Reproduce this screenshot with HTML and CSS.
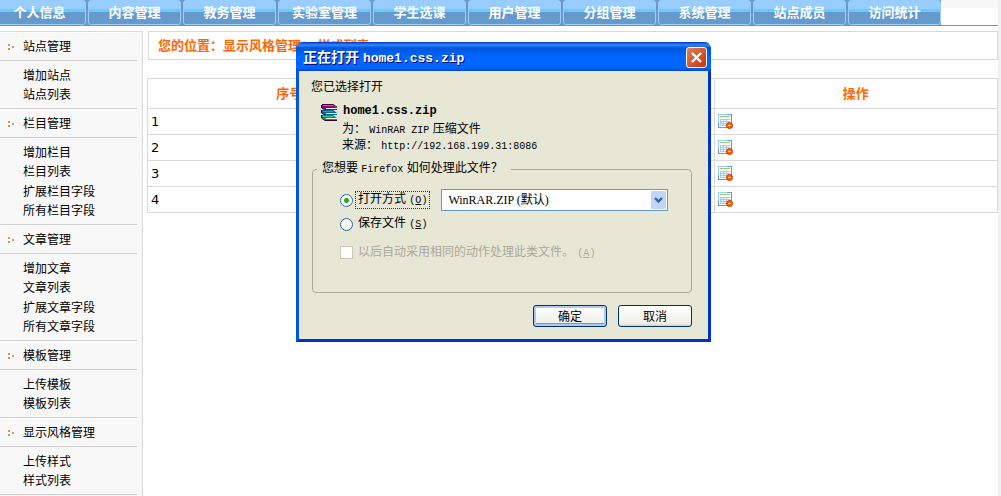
FILE: index.html
```html
<!DOCTYPE html>
<html lang="zh-CN">
<head>
    <meta charset="UTF-8">
    <meta name="viewport" content="width=device-width, initial-scale=1.0">
    <title>样式列表</title>
    <link rel="stylesheet" href="styles.css">
</head>
<body>
    <!-- 图标 -->
    <svg class="sprite" width="0" height="0">
        <symbol id="icon-delete" viewBox="0 0 16 16">
            <rect x="0.5" y="0.5" width="13" height="13" fill="#fff" stroke="#6699cc"/>
            <path d="M0.5 9V0.5H9" fill="none" stroke="#99ccff"/>
            <path d="M2 2.5H12" stroke="#99cc66"/>
            <path d="M2 5.5H12M2 7.5H12M2 9.5H12M2 11.5H8M2.5 5V12M5.5 5V12M8.5 5V12" stroke="#99ccff" fill="none"/>
            <circle cx="11.5" cy="11.5" r="3" fill="#ff6600" stroke="#cc3300"/>
            <path d="M10 11.5H13" stroke="#fff"/>
        </symbol>
    </svg>

    <ul class="nav">
        <li><a href="#">个人信息</a></li>
        <li><a href="#">内容管理</a></li>
        <li><a href="#">教务管理</a></li>
        <li><a href="#">实验室管理</a></li>
        <li><a href="#">学生选课</a></li>
        <li><a href="#">用户管理</a></li>
        <li><a href="#">分组管理</a></li>
        <li><a href="#">系统管理</a></li>
        <li><a href="#">站点成员</a></li>
        <li><a href="#">访问统计</a></li>
    </ul>

    <div class="layout">
        <!-- 左侧菜单 -->
        <div class="sidebar">
            <h2>站点管理</h2>
            <ul>
                <li><a href="#">增加站点</a></li>
                <li><a href="#">站点列表</a></li>
            </ul>
            <h2>栏目管理</h2>
            <ul>
                <li><a href="#">增加栏目</a></li>
                <li><a href="#">栏目列表</a></li>
                <li><a href="#">扩展栏目字段</a></li>
                <li><a href="#">所有栏目字段</a></li>
            </ul>
            <h2>文章管理</h2>
            <ul>
                <li><a href="#">增加文章</a></li>
                <li><a href="#">文章列表</a></li>
                <li><a href="#">扩展文章字段</a></li>
                <li><a href="#">所有文章字段</a></li>
            </ul>
            <h2>模板管理</h2>
            <ul>
                <li><a href="#">上传模板</a></li>
                <li><a href="#">模板列表</a></li>
            </ul>
            <h2>显示风格管理</h2>
            <ul>
                <li><a href="#">上传样式</a></li>
                <li><a href="#">样式列表</a></li>
            </ul>
        </div>

        <!-- 样式列表 -->
        <div class="main">
            <div class="position">您的位置：显示风格管理： 样式列表</div>
            <table class="list">
                <tr><th>序号</th><th>名称</th><th>操作</th></tr>
                <tr><td>1</td><td></td><td><a href="#" aria-label="删除"><svg class="icon"><use href="#icon-delete"/></svg></a></td></tr>
                <tr><td>2</td><td></td><td><a href="#" aria-label="删除"><svg class="icon"><use href="#icon-delete"/></svg></a></td></tr>
                <tr><td>3</td><td></td><td><a href="#" aria-label="删除"><svg class="icon"><use href="#icon-delete"/></svg></a></td></tr>
                <tr><td>4</td><td></td><td><a href="#" aria-label="删除"><svg class="icon"><use href="#icon-delete"/></svg></a></td></tr>
            </table>
        </div>
    </div>

    <!-- 下载对话框 -->
    <form class="dialog">
        <div class="titlebar">
            <span>正在打开 <span class="mono">home1.css.zip</span></span>
            <button type="button" class="close" aria-label="关闭">
                <svg width="19" height="19" viewBox="0 0 19 19"><path d="M5 5L14 14M14 5L5 14" stroke="#fff" stroke-width="2.4"/></svg>
            </button>
        </div>
        <div class="content">
            <p>您已选择打开</p>
            <div class="file">
                <svg width="17" height="17" viewBox="0 0 17 17">
                    <path d="M1 1H12L16 4V6H4L1 4Z" fill="#990066"/>
                    <path d="M2 1.5H12" stroke="#cc6699"/>
                    <path d="M5 4.5H16" stroke="#fff"/>
                    <path d="M1 6H12L16 9V11H4L1 9Z" fill="#006699"/>
                    <path d="M2 7.5H12" stroke="#3399cc"/>
                    <path d="M5 9.5H16" stroke="#ccffff"/>
                    <path d="M1 11H12L16 14V16H4L1 14Z" fill="#009966"/>
                    <path d="M2 12.5H12" stroke="#33cc99"/>
                    <path d="M5 14.5H16" stroke="#ffffcc"/>
                    <path d="M1 0.5H12L16 3M0.5 1V4L4 6M0.5 6V9L4 11M0.5 11V14L4 16.5H16" fill="none" stroke="#330033"/>
                </svg>
                <div>
                    <b class="mono">home1.css.zip</b>
                    <p>为： <span class="mono">WinRAR ZIP</span> 压缩文件</p>
                    <p>来源： <span class="mono">http://192.168.199.31:8086</span></p>
                </div>
            </div>
            <fieldset>
                <legend>您想要 <span class="mono">Firefox</span> 如何处理此文件？</legend>
                <div class="row">
                    <input type="radio" name="action" id="open" checked>
                    <label for="open" class="focus">打开方式 <span class="mono">(<u>O</u>)</span></label>
                    <div class="select">
                        <select aria-label="打开方式">
                            <option>WinRAR.ZIP (默认)</option>
                        </select>
                        <svg width="15" height="18" viewBox="0 0 15 18">
                            <rect width="15" height="18" rx="1" fill="#c2d5fc"/>
                            <path d="M4 7L7.5 10.5L11 7" fill="none" stroke="#336699" stroke-width="2.4"/>
                        </svg>
                    </div>
                </div>
                <div class="row">
                    <input type="radio" name="action" id="save">
                    <label for="save">保存文件 <span class="mono">(<u>S</u>)</span></label>
                </div>
                <div class="row disabled">
                    <input type="checkbox" id="auto" disabled>
                    <label for="auto">以后自动采用相同的动作处理此类文件。 <span class="mono">(<u>A</u>)</span></label>
                </div>
            </fieldset>
            <div class="buttons">
                <button type="button" class="default">确定</button>
                <button type="button">取消</button>
            </div>
        </div>
    </form>
</body>
</html>
```
FILE: styles.css
```css
* {
    box-sizing: border-box;
}
body {
    margin: 0;
    border-right: 3px solid #f0f0f0;
    min-height: 100vh;
    display: flex;
    flex-direction: column;
    overflow: hidden;
    background: #fff;
    color: #000;
    font: 12px/19px "Liberation Sans", "Noto Sans CJK SC", sans-serif;
}
ul, p, h2 {
    margin: 0;
    padding: 0;
    list-style: none;
}
a {
    color: inherit;
    text-decoration: none;
}
.sprite {
    position: absolute;
}

/* 顶部导航 */
.nav {
    display: flex;
    height: 26px;
    padding-right: 55px;
    border-bottom: 1px solid #6699cc;
    background: linear-gradient(#f7f7f7 8px, #fff 8px);
}
.nav li {
    flex: none;
    width: 95px;
    padding-right: 2px;
    background: #6699cc;
}
.nav li:first-child {
    margin-left: -7px;
}
.nav li:last-child {
    width: 93px;
    padding-right: 0;
}
.nav a {
    display: block;
    height: 25px;
    border: 1px solid #99ccff;
    border-radius: 3px;
    background: linear-gradient(#99ccff 8px, #66ccff 8px, #66ccff 11px, #6699cc 11px);
    color: #fff;
    font-size: 13px;
    font-weight: bold;
    line-height: 24px;
    text-align: center;
}

.layout {
    flex: 1;
    display: flex;
    gap: 4px;
    padding-top: 5px;
}

/* 左侧菜单 */
.sidebar {
    flex: none;
    width: 143px;
    padding-right: 5px;
    border: 1px solid #d9d9d9;
    border-left: none;
    border-bottom: none;
    background: #f8f8f8;
}
.sidebar h2 {
    display: flex;
    align-items: center;
    height: 29px;
    padding-top: 2px;
    border-top: 1px solid #fff;
    border-bottom: 1px solid #d0d0d0;
    font-size: 12px;
    font-weight: normal;
}
.sidebar h2::before {
    content: "";
    width: 7px;
    height: 7px;
    margin: 0 8px;
    background:
        linear-gradient(#cc9966, #cc9966) 0 0 / 2px 2px no-repeat,
        linear-gradient(#cc9933, #cc9933) 0 4px / 2px 2px no-repeat,
        linear-gradient(#c0a080, #c0a080) 4px 2px / 2px 2px no-repeat;
}
.sidebar ul {
    padding: 6px 0 2px 23px;
    border-bottom: 1px solid #d0d0d0;
}
.sidebar li:nth-child(even) {
    padding-bottom: 1px;
}

/* 内容区 */
.main {
    flex: 1;
}
.position {
    height: 29px;
    margin-left: 1px;
    padding-left: 9px;
    border: 1px solid #d9d9d9;
    color: #ff6600;
    font-size: 13px;
    font-weight: bold;
    line-height: 27px;
}
.list {
    width: 100%;
    margin-top: 18px;
    border-collapse: collapse;
    table-layout: fixed;
}
.list th, .list td {
    height: 26px;
    padding: 0 3px;
    border: 1px solid #d9d9d9;
    font-family: "DejaVu Sans", "Noto Sans CJK SC", sans-serif;
    font-size: 13px;
}
.list th {
    height: 30px;
    color: #ff6600;
}
.icon {
    display: block;
    width: 16px;
    height: 16px;
}

/* 下载对话框 */
.dialog {
    position: absolute;
    top: 42px;
    left: 296px;
    width: 415px;
    border: 3px solid #0033cc;
    border-top: none;
    border-left-color: #0055e5;
    border-radius: 7px 7px 0 0;
    background: #e7e7d6;
    line-height: 15px;
}
.mono {
    font-family: "Liberation Mono", monospace;
    font-size: 10px;
}
.titlebar {
    display: flex;
    align-items: center;
    justify-content: space-between;
    height: 29px;
    margin: 0 -3px;
    padding: 2px 4px 0 7px;
    border-radius: 7px 7px 0 0;
    background: linear-gradient(#0033cc, #3388ff 3px, #0055dd 6px, #0066ff 15px, #0066ff 26px, #0044cc);
    color: #fff;
    font-size: 14px;
    font-weight: bold;
    text-shadow: 1px 1px #000066;
}
.titlebar .mono {
    font-size: 13px;
}
.close {
    width: 21px;
    height: 21px;
    padding: 0;
    border: 1px solid #fff;
    border-radius: 3px;
    background: linear-gradient(135deg, #e08060, #cc3300);
}
.close svg {
    display: block;
}
.content {
    padding: 9px 16px 12px 13px;
}
.content p {
    margin-left: -1px;
}
.file {
    display: flex;
    gap: 5px;
    padding: 9px 0 0 9px;
}
.file b {
    display: block;
    margin-bottom: 3px;
}
.file b.mono {
    font-size: 12px;
}
fieldset {
    height: 132px;
    margin: 7px 0 12px;
    padding: 11px 23px 0 27px;
    border: 1px solid #aca899;
    border-radius: 4px;
}
legend {
    margin-left: -23px;
    padding: 0 8px 0 5px;
}
.row {
    display: flex;
    align-items: center;
    gap: 2px;
    height: 24px;
}
.row label {
    padding: 0 2px;
    border: 1px dotted transparent;
}
.row label.focus {
    border-color: #333;
}
.row input {
    appearance: none;
    flex: none;
    width: 13px;
    height: 13px;
    margin: 0;
    border: 1px solid #336699;
    border-radius: 50%;
    background: #f6f6f2;
}
.row input:checked {
    background: radial-gradient(circle, #22aa22 2px, #fff 3px);
}
.row input[type="checkbox"] {
    border-color: #cac8bb;
    border-radius: 0;
    background: #fff;
}
.row.disabled {
    height: 33px;
    color: #aca899;
}
.select {
    position: relative;
    flex: 1;
    margin-left: 9px;
}
.select select {
    appearance: none;
    display: block;
    width: 100%;
    height: 22px;
    padding: 0 20px 0 6px;
    border: 1px solid #6699cc;
    border-radius: 0;
    background: #fff;
    color: #000;
    font: 12px "Liberation Serif", "Noto Sans CJK SC", serif;
}
.select svg {
    position: absolute;
    top: 2px;
    right: 2px;
    pointer-events: none;
}
.buttons {
    display: flex;
    justify-content: flex-end;
    gap: 11px;
}
.buttons button {
    width: 74px;
    height: 22px;
    padding: 0;
    border: 1px solid #003366;
    border-radius: 3px;
    background: linear-gradient(#fff, #f0f0ea 85%, #d6d0c5);
    color: #000;
    font: 12px "Noto Sans CJK SC", sans-serif;
    line-height: 18px;
}
.buttons .default {
    box-shadow: inset 0 0 0 2px #b0c8f4, inset 0 -3px #6699ee;
}
```
